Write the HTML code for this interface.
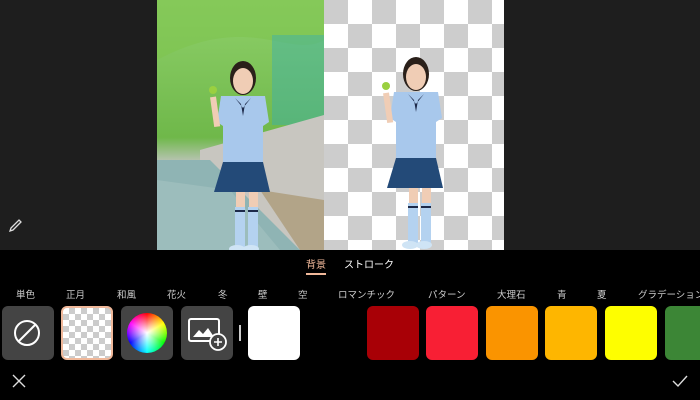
<!DOCTYPE html>
<html><head><meta charset="utf-8"><style>
*{margin:0;padding:0;box-sizing:border-box}
body{width:700px;height:400px;background:#000;overflow:hidden;position:relative;font-family:"Liberation Sans","Noto Sans CJK JP",sans-serif}
.top{position:absolute;left:0;top:0;width:700px;height:250px;background:#1e1e1e}
.tab{position:absolute;top:256px;font-size:10px;color:#fff}
.cat{position:absolute;top:287px;font-size:9.5px;color:#ccc;white-space:nowrap}
.sw{position:absolute;top:306px;width:52px;height:54px;border-radius:6px}
</style></head><body>
<div class="top"></div>
<svg style="position:absolute;left:0;top:0" width="700" height="250">
<defs>
<pattern id="ck" x="324" y="0" width="48" height="48" patternUnits="userSpaceOnUse">
<rect width="48" height="48" fill="#fff"/><rect width="24" height="24" fill="#cdcdcd"/><rect x="24" y="24" width="24" height="24" fill="#cdcdcd"/></pattern>
<linearGradient id="bg1" x1="0" y1="0" x2="0" y2="1"><stop offset="0" stop-color="#8fd06a"/><stop offset=".55" stop-color="#6fb84a"/><stop offset=".65" stop-color="#bcc4b8"/><stop offset="1" stop-color="#7fa4a2"/></linearGradient>
<g id="girl">
<ellipse cx="416" cy="74" rx="13" ry="17" fill="#2a201a"/>
<ellipse cx="416" cy="77" rx="10" ry="13" fill="#f0cdb5"/>
<path d="M394 92 L438 92 L442 118 L436 122 L436 158 L396 158 L396 122 L390 118Z" fill="#a8c8ec"/>
<path d="M408 94 L416 104 L424 94 L418 100 L416 112 L414 100Z" fill="#1d2a4a"/>
<path d="M396 158 L436 158 L443 188 L387 188Z" fill="#234a78"/>
<rect x="409" y="188" width="9" height="16" fill="#f0cdb5"/><rect x="422" y="188" width="9" height="16" fill="#f0cdb5"/>
<rect x="408" y="203" width="10" height="40" fill="#b4d2f0"/><rect x="421" y="203" width="10" height="40" fill="#b4d2f0"/>
<rect x="408" y="206" width="10" height="2" fill="#1d2a4a"/><rect x="421" y="206" width="10" height="2" fill="#1d2a4a"/>
<rect x="384" y="93" width="6" height="30" fill="#f0cdb5" transform="rotate(-8 386 100)"/>
<circle cx="386" cy="86" r="4" fill="#9ad040"/>
<ellipse cx="410" cy="245" rx="8" ry="4" fill="#cfe4f5"/><ellipse cx="424" cy="245" rx="8" ry="4" fill="#cfe4f5"/>
</g>
</defs>
<rect x="157" y="0" width="167" height="250" fill="url(#bg1)"/>
<path d="M157 0 H324 V40 C290 60 250 10 157 60Z" fill="#7ec44e" opacity=".6"/>
<rect x="272" y="35" width="52" height="90" fill="#3ab0b0" opacity=".45"/>
<path d="M200 150 L324 115 L324 250 L300 250 L200 165Z" fill="#c8c6c0"/>
<path d="M260 190 L324 200 L324 250 L300 250Z" fill="#b2a488"/>
<path d="M157 160 L210 160 L300 250 L157 250Z" fill="#8fb4b4"/>
<path d="M157 180 L230 190 L280 250 L157 250Z" fill="#a9c6c4" opacity=".5"/>
<use href="#girl" transform="translate(-173,4)"/>
<rect x="324" y="0" width="180" height="250" fill="url(#ck)"/>
<use href="#girl"/>
<path d="M11 228 L19 220 L21 222 L13 230 L10 231Z" fill="none" stroke="#ddd" stroke-width="1.3"/>
</svg>
<div class="tab" style="left:306px;color:#f0b89a">背景</div>
<div style="position:absolute;left:306px;top:273px;width:20px;height:2px;background:#f0b89a"></div>
<div class="tab" style="left:344px">ストローク</div>
<div class="cat" style="left:16px">単色</div><div class="cat" style="left:66px">正月</div><div class="cat" style="left:117px">和風</div><div class="cat" style="left:167px">花火</div><div class="cat" style="left:218px">冬</div><div class="cat" style="left:258px">壁</div><div class="cat" style="left:298px">空</div><div class="cat" style="left:338px">ロマンチック</div><div class="cat" style="left:428px">パターン</div><div class="cat" style="left:497px">大理石</div><div class="cat" style="left:557px">青</div><div class="cat" style="left:597px">夏</div><div class="cat" style="left:638px">グラデーション</div>
<div class="sw" style="left:2px;background:#444"><svg width="52" height="54"><circle cx="25" cy="27" r="12" fill="none" stroke="#fff" stroke-width="2"/><line x1="17" y1="35" x2="33" y2="19" stroke="#fff" stroke-width="2"/></svg></div>
<div class="sw" style="left:61px;border:2px solid #f0b89a;background:repeating-conic-gradient(#ccc 0 25%,#fff 0 50%) 0 0/12px 12px"></div>
<div class="sw" style="left:121px;background:#444"><div style="position:absolute;left:6px;top:7px;width:40px;height:40px;border-radius:50%;background:radial-gradient(circle,#fff 0,rgba(255,255,255,0) 70%),conic-gradient(red,#ff0,#0f0,#0ff,#00f,#f0f,red)"></div></div>
<div class="sw" style="left:181px;background:#444"><svg width="52" height="54"><rect x="8" y="13" width="30" height="22" rx="2" fill="none" stroke="#fff" stroke-width="2"/><path d="M12 31 L18 24 L22 28 L27 22 L33 31Z" fill="#fff"/><circle cx="37" cy="36" r="8" fill="#444" stroke="#fff" stroke-width="1.8"/><path d="M37 32V40M33 36H41" stroke="#fff" stroke-width="1.6"/></svg></div>
<div style="position:absolute;left:239px;top:325px;width:2px;height:16px;background:#ccc"></div>
<div class="sw" style="left:248px;background:#fff"></div>
<div class="sw" style="left:367px;background:#a80006"></div>
<div class="sw" style="left:426px;background:#f81f34"></div>
<div class="sw" style="left:486px;background:#fa9400"></div>
<div class="sw" style="left:545px;background:#feb600"></div>
<div class="sw" style="left:605px;background:#fefe00"></div>
<div class="sw" style="left:665px;background:#3c8636"></div>
<svg style="position:absolute;left:12px;top:374px" width="14" height="14"><path d="M1 1L13 13M13 1L1 13" stroke="#ddd" stroke-width="1.4"/></svg>
<svg style="position:absolute;left:672px;top:374px" width="16" height="14"><path d="M1 7L6 12L15 2" stroke="#ddd" stroke-width="1.4" fill="none"/></svg>
</body></html>
